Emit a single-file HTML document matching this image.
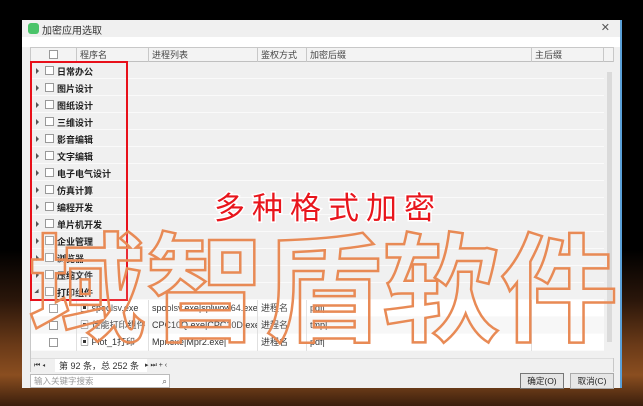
<!DOCTYPE html>
<html><head><meta charset="utf-8"><style>
*{margin:0;padding:0;box-sizing:border-box}
body{width:643px;height:406px;overflow:hidden;position:relative;font-family:"Liberation Sans","Noto Sans CJK SC",sans-serif;font-size:9px;color:#222;
background:linear-gradient(180deg,#000 0,#000 250px,#2a160a 300px,#6a3a18 345px,#8a4e20 375px,#3a1e0c 406px);}
.dlg{position:absolute;left:22px;top:20px;width:600px;height:368px;background:#f0f0f0;border-right:2px solid #5aa0d8}
.title{height:17px;background:#f0f0f0;position:relative}
.title .ic{position:absolute;left:6px;top:3px;width:11px;height:11px;border-radius:3px;background:#4bc46a}
.title span{position:absolute;left:20px;top:2px;font-size:10px;color:#333}
.title .x{position:absolute;right:10px;top:1px;font-size:11px;color:#555}
.white{height:10px;background:#fff}
.grid{position:absolute;left:8px;top:27px;width:584px;height:325px;border:1px solid #c8c8c8;background:#f0f0f0}
.hdr{position:absolute;left:0;top:0;height:14px;width:582px;background:#f3f3f3;border-bottom:1px solid #c0c0c0}
.hdr div{position:absolute;top:0;height:14px;border-right:1px solid #c8c8c8;padding-left:3px;line-height:14px;color:#444}
.row{position:absolute;left:0;width:573px;height:17px;border-bottom:1px solid #fafafa}
.cb{position:absolute;width:9px;height:9px;border:1px solid #999;background:#fff}
.tri{position:absolute;left:5px;top:6px;width:0;height:0;border-left:3px solid #555;border-top:3px solid transparent;border-bottom:3px solid transparent}
.lbl{position:absolute;left:26px;top:3px;font-weight:bold;color:#222}
.drow{background:#fff}
.drow div{position:absolute;top:0;height:17px;line-height:17px;border-right:1px solid #e0e0e0;padding-left:3px;color:#333;white-space:nowrap;overflow:hidden}
.redbox{position:absolute;left:30px;top:61px;width:98px;height:240px;border:2px solid #e8101a}
.sb{position:absolute;left:574px;top:14px;width:9px;height:296px;background:#f0f0f0}
.sb i{position:absolute;left:2px;top:10px;width:5px;height:270px;background:#dadada}
.pager{position:absolute;left:0;top:310px;width:582px;height:14px;border-top:1px solid #ddd;background:#f0f0f0;line-height:14px;color:#333}
.search{position:absolute;left:8px;top:354px;width:140px;height:14px;border:1px solid #bbb;background:#fff;color:#999;line-height:12px;padding-left:3px;font-size:8.5px}
.btn{position:absolute;top:353px;height:16px;width:44px;border:1px solid #aaa;background:#e6e6e6;text-align:center;line-height:14px;font-size:8.5px}
.wm1{position:absolute;left:214px;top:186px;font-size:31px;color:#e8151c;-webkit-text-stroke:3px #fff;letter-spacing:7px;font-family:"Noto Sans CJK SC",sans-serif;paint-order:stroke fill;line-height:40px}
.wm2{position:absolute;left:28px;top:196px;font-size:118px;font-weight:bold;color:rgba(255,255,255,0.12);-webkit-text-stroke:2.5px #e88a55;letter-spacing:0px;font-family:"Noto Sans CJK SC",sans-serif;line-height:170px;white-space:nowrap}
</style></head><body>
<div class="dlg">
<div class="title"><div class="ic"></div><span>加密应用选取</span><div class="x">✕</div></div>
<div class="white"></div>
<div class="grid">
<div class="hdr">
<div style="left:0;width:46px"><span class="cb" style="left:18px;top:2px"></span></div>
<div style="left:46px;width:72px">程序名</div>
<div style="left:118px;width:109px">进程列表</div>
<div style="left:227px;width:49px">鉴权方式</div>
<div style="left:276px;width:225px">加密后缀</div>
<div style="left:501px;width:72px">主后缀</div>
</div>
<div class="row" style="top:14px"><i class="tri"></i><span class="cb" style="left:14px;top:4px"></span><span class="lbl">日常办公</span></div>
<div class="row" style="top:31px"><i class="tri"></i><span class="cb" style="left:14px;top:4px"></span><span class="lbl">图片设计</span></div>
<div class="row" style="top:48px"><i class="tri"></i><span class="cb" style="left:14px;top:4px"></span><span class="lbl">图纸设计</span></div>
<div class="row" style="top:65px"><i class="tri"></i><span class="cb" style="left:14px;top:4px"></span><span class="lbl">三维设计</span></div>
<div class="row" style="top:82px"><i class="tri"></i><span class="cb" style="left:14px;top:4px"></span><span class="lbl">影音编辑</span></div>
<div class="row" style="top:99px"><i class="tri"></i><span class="cb" style="left:14px;top:4px"></span><span class="lbl">文字编辑</span></div>
<div class="row" style="top:116px"><i class="tri"></i><span class="cb" style="left:14px;top:4px"></span><span class="lbl">电子电气设计</span></div>
<div class="row" style="top:133px"><i class="tri"></i><span class="cb" style="left:14px;top:4px"></span><span class="lbl">仿真计算</span></div>
<div class="row" style="top:150px"><i class="tri"></i><span class="cb" style="left:14px;top:4px"></span><span class="lbl">编程开发</span></div>
<div class="row" style="top:167px"><i class="tri"></i><span class="cb" style="left:14px;top:4px"></span><span class="lbl">单片机开发</span></div>
<div class="row" style="top:184px"><i class="tri"></i><span class="cb" style="left:14px;top:4px"></span><span class="lbl">企业管理</span></div>
<div class="row" style="top:201px"><i class="tri"></i><span class="cb" style="left:14px;top:4px"></span><span class="lbl">浏览器</span></div>
<div class="row" style="top:218px"><i class="tri"></i><span class="cb" style="left:14px;top:4px"></span><span class="lbl">压缩文件</span></div>
<div class="row" style="top:235px"><i class="tri" style="transform:rotate(45deg)"></i><span class="cb" style="left:14px;top:4px"></span><span class="lbl">打印组件</span></div>
<div class="row drow" style="top:252px"><div style="left:0;width:46px"><span class="cb" style="left:18px;top:4px"></span></div><div style="left:46px;width:72px">▣ spoolsv.exe</div><div style="left:118px;width:109px">spoolsv.exe|splwow64.exe|</div><div style="left:227px;width:49px">进程名</div><div style="left:276px;width:225px">pdf|</div></div>
<div class="row drow" style="top:269px;background:#f7f7f7"><div style="left:0;width:46px"><span class="cb" style="left:18px;top:4px"></span></div><div style="left:46px;width:72px">▣ 佳能打印组件</div><div style="left:118px;width:109px">CPC10Q.exe|CPC10D.exe|CP...</div><div style="left:227px;width:49px">进程名</div><div style="left:276px;width:225px">tmp|</div></div>
<div class="row drow" style="top:286px"><div style="left:0;width:46px"><span class="cb" style="left:18px;top:4px"></span></div><div style="left:46px;width:72px">▣ Plot_1打印</div><div style="left:118px;width:109px">Mpr.exe|Mpr2.exe|</div><div style="left:227px;width:49px">进程名</div><div style="left:276px;width:225px">pdf|</div></div>
<div class="sb"><i></i></div>
<div class="pager"><span style="position:absolute;left:3px;font-size:7px">⏮ ◂</span><span style="position:absolute;left:24px;background:#fff;padding:0 8px 0 4px;height:13px">第 92 条，总 252 条</span><span style="position:absolute;left:114px;font-size:7px">▸ ⏭ + ‹</span></div>
</div>
<div class="search">输入关键字搜索<span style="position:absolute;right:2px;color:#555">⌕</span></div>
<div class="btn" style="left:498px;border-color:#777">确定(O)</div>
<div class="btn" style="left:548px">取消(C)</div>
</div>
<div class="redbox"></div>
<div class="wm1">多种格式加密</div>
<div class="wm2">域智盾软件</div>
</body></html>
